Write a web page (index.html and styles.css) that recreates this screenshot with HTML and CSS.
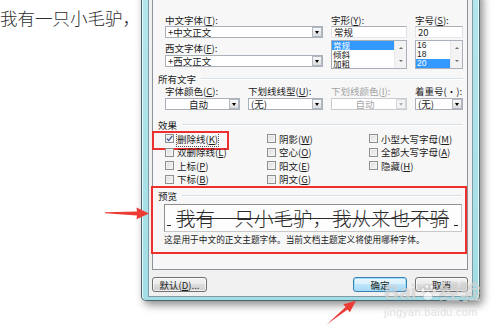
FILE: index.html
```html
<!DOCTYPE html>
<html lang="zh-CN">
<head>
    <meta charset="utf-8">
    <title>字体</title>
    <link rel="stylesheet" href="styles.css">
</head>
<body>
    <div class="doc">
        <p class="doc-line">我有一只小毛驴，</p>
    </div>

    <div class="dialog">
        <div class="panel">
            <div class="tabpage">
                <div class="font-grid">
                    <div class="col">
                        <label class="lbl">中文字体(<u>T</u>):</label>
                        <div class="combo"><span>+中文正文</span><i class="drop"></i></div>
                        <label class="lbl lbl-gap">西文字体(<u>F</u>):</label>
                        <div class="combo"><span>+西文正文</span><i class="drop"></i></div>
                    </div>
                    <div class="col">
                        <label class="lbl">字形(<u>Y</u>):</label>
                        <div class="textbox">常规</div>
                        <div class="listbox">
                            <ul>
                                <li class="sel">常规</li>
                                <li>倾斜</li>
                                <li>加粗</li>
                            </ul>
                            <div class="vscroll"><b class="up"></b><b class="down"></b></div>
                        </div>
                    </div>
                    <div class="col">
                        <label class="lbl">字号(<u>S</u>):</label>
                        <div class="textbox">20</div>
                        <div class="listbox">
                            <ul class="num">
                                <li>16</li>
                                <li>18</li>
                                <li class="sel">20</li>
                            </ul>
                            <div class="vscroll"><b class="up"></b><b class="down"></b></div>
                        </div>
                    </div>
                </div>

                <div class="group-head">所有文字</div>
                <div class="attr-grid">
                    <div class="col">
                        <label class="lbl">字体颜色(<u>C</u>):</label>
                        <div class="combo center"><span>自动</span><i class="drop"></i></div>
                    </div>
                    <div class="col">
                        <label class="lbl">下划线线型(<u>U</u>):</label>
                        <div class="combo"><span>(无)</span><i class="drop"></i></div>
                    </div>
                    <div class="col">
                        <label class="lbl disabled">下划线颜色(<u>I</u>):</label>
                        <div class="combo center off"><span>自动</span><i class="drop"></i></div>
                    </div>
                    <div class="col">
                        <label class="lbl">着重号(·):</label>
                        <div class="combo"><span>(无)</span><i class="drop"></i></div>
                    </div>
                </div>

                <div class="group-head">效果</div>
                <div class="effects">
                    <div class="cb marked"><span class="box on"><svg width="7" height="7" viewBox="0 0 7 7"><path d="M0.8 3.6 L2.7 5.6 L6.3 0.9" fill="none" stroke="#3c4f8f" stroke-width="1.2"/></svg></span><span class="focus">删除线(<u>K</u>)</span></div>
                    <div class="cb"><span class="box"></span>双删除线(<u>L</u>)</div>
                    <div class="cb"><span class="box"></span>上标(<u>P</u>)</div>
                    <div class="cb"><span class="box"></span>下标(<u>B</u>)</div>
                    <div class="cb"><span class="box"></span>阴影(<u>W</u>)</div>
                    <div class="cb"><span class="box"></span>空心(<u>O</u>)</div>
                    <div class="cb"><span class="box"></span>阳文(<u>E</u>)</div>
                    <div class="cb"><span class="box"></span>阴文(<u>G</u>)</div>
                    <div class="cb"><span class="box"></span>小型大写字母(<u>M</u>)</div>
                    <div class="cb"><span class="box"></span>全部大写字母(<u>A</u>)</div>
                    <div class="cb"><span class="box"></span>隐藏(<u>H</u>)</div>
                </div>

                <div class="preview-group">
                    <div class="group-head inner">预览</div>
                    <div class="preview">
                        <span class="tick"></span>
                        <span class="sample">我有一只小毛驴，我从来也不骑</span>
                        <span class="tick"></span>
                    </div>
                    <p class="desc">这是用于中文的正文主题字体。当前文档主题定义将使用哪种字体。</p>
                </div>
            </div>

            <div class="buttons">
                <button class="btn btn-default">默认(<u>D</u>)...</button>
                <button class="btn btn-ok">确定</button>
                <button class="btn btn-cancel">取消</button>
            </div>
        </div>
    </div>

    <div class="watermark">
        <div class="wm-logo">Bai<svg width="20" height="20" viewBox="0 0 20 20"><g fill="rgba(255,255,255,0.6)" stroke="rgba(120,120,120,0.3)" stroke-width="0.8"><ellipse cx="5" cy="8" rx="2" ry="2.6"/><ellipse cx="9" cy="4.5" rx="2" ry="2.6"/><ellipse cx="13.5" cy="5" rx="2" ry="2.6"/><ellipse cx="16.5" cy="9" rx="1.8" ry="2.3"/><path d="M10 9.5 C6 9.5 4 15 6 17 C8 18.5 12 18.5 14 17 C16 15 14 9.5 10 9.5 Z"/></g></svg>经验</div>
        <div class="wm-url">jingyan.baidu.com</div>
    </div>

    <svg class="arrows" width="500" height="330" viewBox="0 0 500 330">
        <polygon points="105,212.2 137,211.4 136.5,207.6 149,213.5 136.5,219.2 137,215.4 105,213.2" fill="#ec3b35"/>
        <polygon points="326.7,324.6 345.6,307 343.4,304.2 356,300.7 349.8,312.2 347.6,309.5" fill="#ec3b35"/>
    </svg>
</body>
</html>
```

FILE: styles.css
```css
* {
    box-sizing: border-box;
}

html, body {
    margin: 0;
}

body {
    width: 500px;
    height: 330px;
    overflow: hidden;
    position: relative;
    background: #ffffff;
    font-family: "Noto Sans CJK SC", "DejaVu Sans", sans-serif;
    color: #1b1b1b;
}

u {
    text-decoration: underline;
    text-underline-offset: 1px;
}

/* document behind the dialog */
.doc {
    padding-top: 7px;
}

.doc-line {
    margin: 0;
    font-size: 17.5px;
    font-weight: 300;
    line-height: 22px;
    color: #2e2e2e;
}

/* dialog window */
.dialog {
    position: absolute;
    left: 141px;
    top: -10px;
    width: 339px;
    border: 1px solid #4a6470;
    border-top: none;
    border-radius: 0 0 5px 5px;
    padding: 0 6px 3px 6px;
    background: linear-gradient(to bottom, #b4e6ec, #a2dde5);
    box-shadow: inset 1px 0 0 #e6f8fa, inset -1px 0 0 #e6f8fa, 3px 4px 9px rgba(0, 0, 0, 0.45);
}

.panel {
    border: 1px solid #7e9ba6;
    border-top: none;
    background: #f0f0f0;
    padding: 0 4px 4px 3px;
}

.tabpage {
    border: 1px solid #8d939b;
    border-top: none;
    background: #f7f7f7;
    padding: 25px 0 15px 0;
}

.lbl {
    display: block;
    height: 11px;
    font-size: 9.5px;
    line-height: 11px;
    white-space: nowrap;
}

.lbl u, .cb u, .btn u {
    text-decoration-thickness: 1px;
}

.lbl-gap {
    margin-top: 5px;
    margin-bottom: 1px;
}

.disabled {
    color: #a3a3a3;
}

.font-grid {
    display: grid;
    grid-template-columns: 158px 76px 48px;
    column-gap: 8px;
    margin-left: 12px;
}

.combo, .textbox {
    height: 12px;
    background: #ffffff;
    border: 1px solid #a9b0ba;
    font-size: 9.5px;
    line-height: 10px;
}

.combo {
    display: flex;
    align-items: center;
    padding-left: 2px;
}

.combo span {
    flex: 1;
    white-space: nowrap;
}

.combo.center span {
    text-align: center;
}

.combo.off {
    border-color: #c9cdd2;
    color: #a5a5a5;
}

.drop {
    width: 10px;
    height: 10px;
    border: 1px solid #b1b8c1;
    background: linear-gradient(#fafafa, #dcdcdc);
    display: flex;
    align-items: center;
    justify-content: center;
}

.drop::after {
    content: "";
    border-left: 2.5px solid transparent;
    border-right: 2.5px solid transparent;
    border-top: 3px solid #000000;
    margin-top: 1px;
}

.combo.off .drop {
    border-color: #d6d9dd;
    background: #f4f4f4;
}

.combo.off .drop::after {
    border-top-color: #b4b4b4;
}

.textbox {
    padding-left: 2px;
    border-color: #abadb3 #dbdfe6 #e3e9ef #e2e3ea;
}

.listbox {
    margin-top: 2px;
    height: 29px;
    border: 1px solid #a9b0ba;
    background: #ffffff;
    display: flex;
}

.listbox ul {
    flex: 1;
    list-style: none;
    margin: 0;
    padding: 0;
}

.listbox li {
    height: 9px;
    line-height: 9px;
    font-size: 8.5px;
    padding-left: 1px;
}

.listbox .num li {
    font-family: "Liberation Sans", sans-serif;
}

.listbox li.sel {
    background: #3399ff;
    color: #ffffff;
}

.vscroll {
    width: 12px;
    background: #f3f3f3;
    border-left: 1px solid #e8e8e8;
    display: flex;
    flex-direction: column;
    justify-content: space-around;
    align-items: center;
}

.vscroll b {
    border-left: 2px solid transparent;
    border-right: 2px solid transparent;
}

.vscroll .up {
    border-bottom: 2px solid #6f6f6f;
}

.vscroll .down {
    border-top: 2px solid #6f6f6f;
}

.group-head {
    display: flex;
    align-items: center;
    height: 12px;
    margin: 4px 4px 0 5px;
    font-size: 9.5px;
    line-height: 12px;
}

.group-head::after {
    content: "";
    flex: 1;
    margin-left: 5px;
    border-top: 1px solid #d6dfe6;
    border-bottom: 1px solid #ffffff;
}

.attr-grid {
    display: grid;
    grid-template-columns: 75px 75px 76px 48px;
    column-gap: 8px;
    margin-left: 12px;
    margin-top: 1px;
}

.attr-grid .lbl {
    margin-bottom: 1px;
}

.attr-grid + .group-head {
    margin-top: 9px;
}

/* check boxes */
.effects {
    display: grid;
    grid-template-rows: repeat(4, 13.5px);
    grid-template-columns: 102px 102px 1fr;
    grid-auto-flow: column;
    margin-left: 12px;
    margin-top: 1px;
}

.cb {
    display: flex;
    align-items: center;
    font-size: 9.5px;
    white-space: nowrap;
    position: relative;
}

.box {
    width: 9px;
    height: 9px;
    margin-right: 3px;
    border: 1px solid #8e8f8f;
    background: linear-gradient(135deg, #d9dadb, #f9f9f9);
    box-shadow: inset 0 0 0 1px #f2f2f2;
    display: flex;
    align-items: center;
    justify-content: center;
}

.box.on {
    background: linear-gradient(135deg, #e2e4e8, #fbfbfb);
}

.focus {
    outline: 1px dotted #555555;
    outline-offset: 0;
}

.cb.marked::before {
    content: "";
    position: absolute;
    left: -13px;
    top: -1px;
    width: 73px;
    height: 15px;
    border: 2px solid #ec3030;
}

/* preview */
.preview-group {
    margin-left: -2px;
    border: 2px solid #ee2f2c;
    padding: 2px 0 6px 0;
}

.group-head.inner {
    margin: 0 3px 0 5px;
}

.preview {
    margin: 2px 3px 0 11px;
    height: 28px;
    border: 1px solid #a4a4a4;
    border-color: #8f8f8f #c8c8c8 #c8c8c8 #8f8f8f;
    background: #fdfdfd;
    display: flex;
    align-items: flex-end;
    justify-content: space-between;
    padding: 0 3px 4px 2px;
}

.tick {
    width: 4px;
    border-bottom: 1px solid #222222;
    margin-bottom: 1px;
}

.sample {
    font-size: 19.5px;
    font-weight: 300;
    line-height: 24px;
    margin-bottom: -3px;
    color: #2a2a2a;
    text-decoration: line-through;
    text-decoration-thickness: 1px;
    white-space: nowrap;
}

.desc {
    margin: 2px 0 0 11px;
    height: 12px;
    font-size: 8.7px;
    line-height: 12px;
    white-space: nowrap;
}

/* bottom buttons */
.buttons {
    display: flex;
    margin-top: 7px;
}

.btn {
    height: 15px;
    padding: 0;
    border: 1px solid #707070;
    border-radius: 3px;
    background: linear-gradient(#f2f2f2 0%, #ebebeb 49%, #dddddd 50%, #cfcfcf 100%);
    box-shadow: inset 0 0 0 1px rgba(255, 255, 255, 0.7);
    font-family: "Noto Sans CJK SC", sans-serif;
    font-size: 9.5px;
    line-height: 12px;
    color: #1b1b1b;
    text-align: center;
}

.btn-default {
    width: 55px;
}

.btn-ok {
    width: 54px;
    margin-left: auto;
    border-color: #3c7fb1;
    box-shadow: inset 0 0 0 1px #9fe0f8;
    background: linear-gradient(#eaf6fd 0%, #d9f0fc 49%, #bee6fd 50%, #a7d9f5 100%);
}

.btn-cancel {
    width: 53px;
    margin-left: 8px;
}

/* overlays: watermark and arrows */
.watermark {
    position: absolute;
    left: 384px;
    top: 280px;
    pointer-events: none;
}

.wm-logo {
    display: flex;
    align-items: center;
    font-family: "Liberation Sans", "Noto Sans CJK SC", sans-serif;
    font-size: 21px;
    font-weight: bold;
    line-height: 24px;
    color: rgba(255, 255, 255, 0.5);
    text-shadow: 0 0 1px rgba(90, 90, 90, 0.4);
}

.wm-logo svg {
    margin: 0 1px;
}

.wm-url {
    font-family: "Liberation Sans", sans-serif;
    font-size: 11px;
    line-height: 12px;
    margin-top: 2px;
    color: rgba(215, 215, 215, 0.8);
    letter-spacing: 0.3px;
}

.arrows {
    position: absolute;
    left: 0;
    top: 0;
    pointer-events: none;
}
```
